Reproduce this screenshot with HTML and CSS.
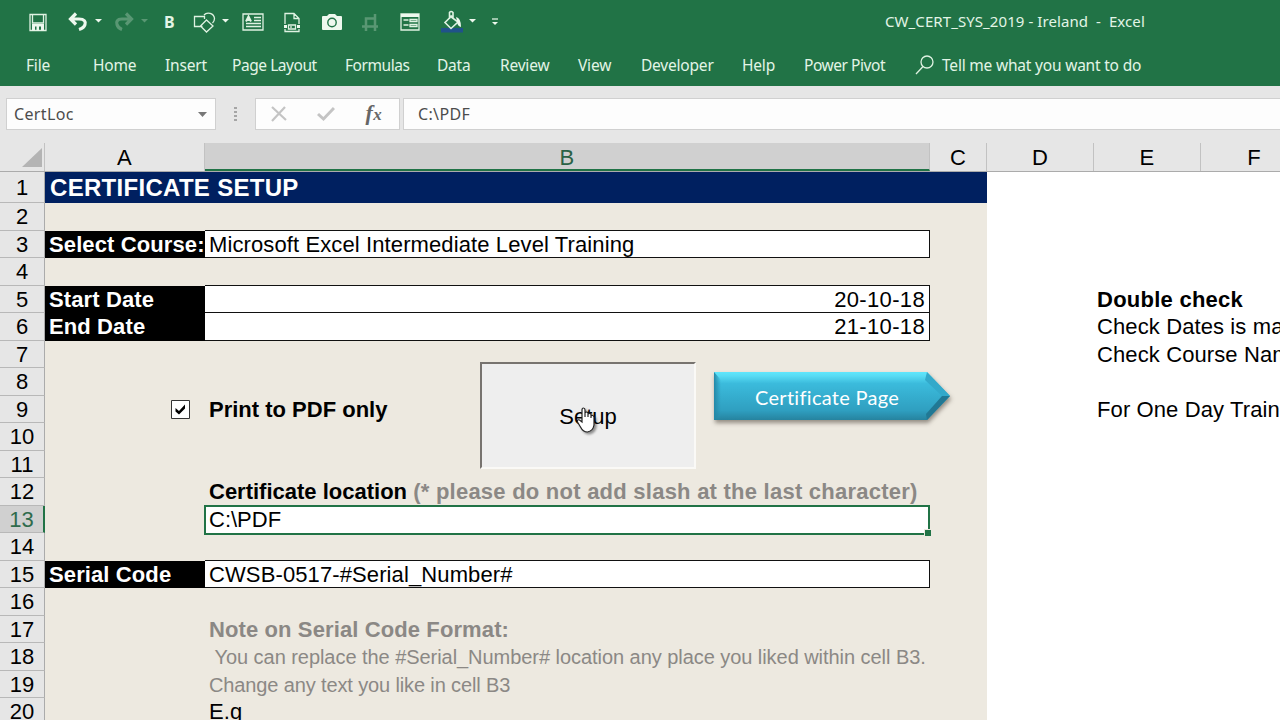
FILE: index.html
```html
<!DOCTYPE html>
<html lang="en">
<head>
    <meta charset="UTF-8">
    <meta name="viewport" content="width=device-width, initial-scale=1.0">
    <title>CW_CERT_SYS_2019 - Ireland - Excel</title>
    <link rel="stylesheet" href="styles.css">
</head>
<body>

<div class="app">
    <!-- Title bar and ribbon tabs -->
    <header class="ribbon">
        <div class="title-bar">
            <div class="quick-access">
                <svg width="20" height="22" viewBox="0 0 20 22" class="line"><path d="M2 3.500H18V19.500H2ZM4.500 4V12H15.500V4"/><path class="solid" d="M4 13H16V19.500H13V15.500H11V19.500H8.500V15.500H7V19.500H4Z"/></svg>
                <svg width="36" height="22" viewBox="0 0 36 22"><path class="thick" d="M3 8H12C17.500 8 19 11 18 13.500Q17 17 12 18.500M9 2.500L3.500 8L9 13.500"/><path class="solid" d="M28 8H35L31.500 11.500Z"/></svg>
                <svg width="36" height="22" viewBox="0 0 36 22" class="off"><path class="thick" d="M18 8H9C4 8 3 11 4 13.500Q5 17 9 18.500M13 2.500L18.500 8L13 13.500"/><path class="solid" d="M28 8H35L31.500 11.500Z"/></svg>
                <span class="bold-button">B</span>
                <svg width="36" height="22" viewBox="0 0 36 22" class="line"><path d="M9.500 15.500H1.500V5.500H11.500V8M11 4C14 .5 21 2 21.500 7.500Q21.500 10 19.500 12M13.500 9L20 15L13.500 21L7.500 15Z"/><path class="solid" d="M29 8H36L32.500 11.500Z"/></svg>
                <svg width="22" height="22" viewBox="0 0 22 22" class="line"><path d="M1 3H21V19H1ZM12 6.500H19M12 9.500H19M4 12.500H19M4 15.500H19"/><path class="mark" d="M4 10.500L6.500 5.500L9 10.500M5 9H8"/></svg>
                <svg width="18" height="22" viewBox="0 0 18 22" class="line"><path d="M2 13V2.500H11L16 7.500V13M11 3V7.500H16M2 18V20.500H16V18M5.500 14H12.500V18H5.500ZM8 15V17"/><path class="solid" d="M1 14H4V17H1ZM14 14H17V17H14Z"/></svg>
                <svg width="20" height="22" viewBox="0 0 20 22"><path class="solid" d="M1 5H5L7 3H13L15 5H19Q20 5 20 6V18Q20 19 19 19H1Q0 19 0 18V6Q0 5 1 5Z"/><circle class="lens" cx="10" cy="11.500" r="4.200"/></svg>
                <svg width="18" height="22" viewBox="0 0 18 22" class="off"><path class="crop-mark" d="M5 11V7.500H14V20M1 15.500H5.500M5 11V15.500H10M10 15.500H17M14 7.500V3M5 15.500V20"/></svg>
                <svg width="20" height="22" viewBox="0 0 20 22" class="line"><path d="M1 3H19V19H1ZM3.500 9H8.500M3.500 14H8.500M10 8.500H17V10.500H10ZM10 13.500H17V15.500H10Z"/><path class="solid" d="M1 3H19V6H1Z"/></svg>
                <svg width="36" height="24" viewBox="0 0 36 24" class="line"><path class="fill-color" d="M0 18H22V22.500H0Z"/><path class="bucket" d="M9 6L17 12L10 18.500L4 12.500L11 5.500M8.500 9V2.500Q10 .5 12 2.500V9"/><path class="solid" d="M15 7Q20 8 20 17Q16 16 16 11Z"/><path class="solid" d="M28 9H35L31.500 12.500Z"/></svg>
                <svg width="8" height="22" viewBox="0 0 8 22" class="line"><path d="M1 8H7"/><path class="solid" d="M1 11H7L4 14Z"/></svg>
            </div>
            <div class="window-title">CW_CERT_SYS_2019 - Ireland&nbsp; -&nbsp; Excel</div>
        </div>
        <nav class="tabs">
            <span>File</span>
            <span>Home</span>
            <span>Insert</span>
            <span class="tight">Page Layout</span>
            <span class="tight">Formulas</span>
            <span>Data</span>
            <span>Review</span>
            <span>View</span>
            <span>Developer</span>
            <span>Help</span>
            <span class="tight">Power Pivot</span>
            <svg width="20" height="22" viewBox="0 0 20 22" class="line"><circle cx="12" cy="8" r="6"/><path d="M8 12.500L1 20"/></svg>
            <span>Tell me what you want to do</span>
        </nav>
    </header>

    <!-- Name box and formula bar -->
    <div class="formula-row">
        <div class="name-box">CertLoc <svg width="9" height="5" viewBox="0 0 9 5"><path d="M0 0H9L4.500 5Z"/></svg></div>
        <div class="grip"><i></i><i></i><i></i><i></i></div>
        <div class="formula-buttons">
            <svg width="16" height="16" viewBox="0 0 16 16"><path d="M1 1L15 14M14 1L1 15"/></svg>
            <svg width="18" height="16" viewBox="0 0 18 16"><path class="tick" d="M1 8L6.500 13L17 2"/></svg>
            <span class="fx">f<small>x</small></span>
        </div>
        <div class="formula-input">C:\PDF</div>
    </div>

    <main class="sheet">
        <div class="col-heads">
            <div class="corner"><svg width="20" height="19" viewBox="0 0 20 19"><path d="M20 0V19H0Z"/></svg></div>
            <div>A</div>
            <div class="active">B</div>
            <div>C</div>
            <div>D</div>
            <div>E</div>
            <div>F</div>
        </div>

        <div class="row first"><b class="num">1</b><div class="title">CERTIFICATE SETUP</div></div>
        <div class="row"><b class="num">2</b></div>
        <div class="row"><b class="num">3</b><div class="label">Select Course:</div><div class="field">Microsoft Excel Intermediate Level Training</div></div>
        <div class="row"><b class="num">4</b></div>
        <div class="row"><b class="num">5</b><div class="label">Start Date</div><div class="field date">20-10-18</div><div class="note strong">Double check</div></div>
        <div class="row"><b class="num">6</b><div class="label">End Date</div><div class="field date">21-10-18</div><div class="note">Check Dates is ma</div></div>
        <div class="row"><b class="num">7</b><div class="note">Check Course Nam</div></div>
        <div class="row"><b class="num">8</b></div>
        <div class="row"><b class="num">9</b><div class="check-cell"><svg class="checkbox" width="19" height="19" viewBox="0 0 19 19"><path class="box" d="M.5 .5H18.500V18.500H.5Z"/><path d="M4.500 8L8 11L14 4.500V8.500L8 14.500L4.500 11.500Z"/></svg></div><div class="text strong print">Print to PDF only</div><div class="note">For One Day Train</div></div>
        <div class="row"><b class="num">10</b></div>
        <div class="row"><b class="num">11</b></div>
        <div class="row"><b class="num">12</b><div class="text strong location">Certificate location <span>(* please do not add slash at the last character)</span></div></div>
        <div class="row"><b class="num active">13</b><div class="field selected">C:\PDF</div></div>
        <div class="row"><b class="num">14</b></div>
        <div class="row"><b class="num">15</b><div class="label">Serial Code</div><div class="field">CWSB-0517-#Serial_Number#</div></div>
        <div class="row"><b class="num">16</b></div>
        <div class="row"><b class="num">17</b><div class="text strong grey">Note on Serial Code Format:</div></div>
        <div class="row"><b class="num">18</b><div class="text hint">&nbsp;You can replace the #Serial_Number# location any place you liked within cell B3.</div></div>
        <div class="row"><b class="num">19</b><div class="text hint short">Change any text you like in cell B3</div></div>
        <div class="row"><b class="num">20</b><div class="text">E.g</div></div>

        <!-- Objects floating over the cells -->
        <button class="setup-button">Setup</button>
        <a class="page-link">
            <svg width="250" height="64" viewBox="0 0 250 64">
                <defs>
                    <linearGradient id="face" x1="0" y1="0" x2="0" y2="1">
                        <stop offset="0" stop-color="#5fe6fc"/>
                        <stop offset="0.08" stop-color="#58dcf4"/>
                        <stop offset="0.24" stop-color="#3bbbdc"/>
                        <stop offset="0.8" stop-color="#2f9fc0"/>
                        <stop offset="1" stop-color="#26839f"/>
                    </linearGradient>
                    <linearGradient id="edge" x1="0" y1="0" x2="1" y2="0">
                        <stop offset="0" stop-color="#2388a8"/>
                        <stop offset="1" stop-color="#2388a8" stop-opacity="0"/>
                    </linearGradient>
                </defs>
                <path fill="url(#face)" d="M4 3H217L240 27L217 51H4Z"/>
                <path fill="url(#edge)" d="M4 3L11 11V44L4 51Z"/>
                <path fill="#33a9ca" d="M217 3L240 27H232L215 11Z"/>
                <path fill="#217894" d="M240 27L217 51L216 45L232 27Z"/>
            </svg>
            <span>Certificate Page</span>
        </a>
        <svg class="cursor" width="26" height="32" viewBox="0 0 26 32"><path d="M7 17V5Q7 3 8.500 3T10 5V12V8Q11.500 6 13 8V12V9Q14.500 7.500 16 9V13V11Q18 9.500 19 12V20Q18 26 12.500 27Q8 27 5.500 22L2.500 17Q2 14 4.500 15Z"/></svg>
    </main>
</div>

</body>
</html>
```
FILE: styles.css
```css
* {
    box-sizing: border-box;
}
body {
    margin: 0;
    overflow: hidden;
    background: #fff;
}
.app {
    width: 1280px;
    height: 720px;
    overflow: hidden;
    font-family: "Liberation Sans", Arial, sans-serif;
}
svg {
    display: block;
    flex: none;
}

/* Ribbon */
.ribbon {
    height: 86px;
    background: #217346;
    color: #e3f5e6;
    font-family: "Noto Sans", sans-serif;
    font-size: 15.5px;
}
.title-bar {
    display: flex;
    height: 44px;
}
.quick-access {
    display: grid;
    grid-template-columns: 39px 46px 51px 29px 49px 41px 39px 39px 39px 41px 50px 8px;
    align-items: center;
    width: 885px;
    padding-left: 28px;
}
.quick-access svg {
    fill: none;
    stroke: none;
}
.quick-access .line,
.tabs .line {
    fill: none;
    stroke: #dff2e2;
    stroke-width: 1.3;
}
.quick-access .solid {
    fill: #eef8ee;
    stroke: none;
}
.quick-access .thick {
    stroke: #eef8ee;
    stroke-width: 3.2;
}
.quick-access .off {
    opacity: 0.27;
}
.crop-mark {
    stroke: #eef8ee;
    stroke-width: 2.5;
}
.mark {
    stroke-width: 2;
}
.lens {
    stroke: #217346;
    stroke-width: 1.4;
}
.fill-color {
    fill: #20528a;
    stroke: none;
}
.bucket {
    stroke-width: 1.6;
}
.bold-button {
    font-weight: bold;
    font-size: 16px;
}
.window-title {
    padding-top: 10px;
    font-size: 15px;
    line-height: 22px;
    white-space: nowrap;
    letter-spacing: 0.08px;
}
.tabs {
    display: grid;
    grid-template-columns: 67px 72px 67px 113px 92px 63px 78px 63px 101px 62px 111px 27px 220px;
    align-items: center;
    padding-left: 26px;
    line-height: 42px;
    white-space: nowrap;
    letter-spacing: -0.2px;
}
.tabs .tight {
    letter-spacing: -0.45px;
}

/* Formula bar */
.formula-row {
    display: flex;
    height: 57px;
    padding: 12px 0 13px 6px;
    background: #e6e6e6;
    font-family: "Noto Sans", sans-serif;
    font-size: 16px;
    letter-spacing: 0.35px;
    color: #4c4c4c;
}
.name-box,
.formula-buttons,
.formula-input {
    display: flex;
    align-items: center;
    background: #fdfdfd;
    border: 1px solid #d0d0d0;
}
.name-box {
    justify-content: space-between;
    width: 210px;
    padding: 0 8px 0 7px;
}
.name-box svg {
    fill: #777;
}
.grip {
    display: flex;
    flex-direction: column;
    justify-content: center;
    align-items: center;
    gap: 2px;
    width: 39px;
}
.grip i {
    width: 3px;
    height: 2px;
    background: #a5a5a5;
}
.formula-buttons {
    justify-content: space-between;
    width: 145px;
    padding: 0 17px 0 15px;
}
.formula-buttons svg {
    fill: none;
    stroke: #c4c4c4;
    stroke-width: 2.2;
}
.formula-buttons .tick {
    stroke-width: 3;
}
.fx {
    font: italic bold 22px/26px "Liberation Serif", serif;
    color: #666;
}
.fx small {
    font-size: 17px;
}
.formula-input {
    flex: 1;
    margin-left: 3px;
    padding-left: 14px;
    border-right: 0;
}

/* Sheet */
.sheet {
    position: relative;
    height: 577px;
    font-size: 22px;
    letter-spacing: 0.11px;
    background: linear-gradient(to right, #ede9e0 987px, #fff 987px);
}
.col-heads,
.row {
    display: grid;
    grid-template-columns: 45px 160px 725px 57px 107px 107px 107px;
}
.col-heads {
    height: 29px;
    background: #e6e6e6;
    border-bottom: 1px solid #ababab;
    line-height: 29px;
    text-align: center;
    overflow: hidden;
}
.col-heads div {
    border-right: 1px solid #c2c2c2;
}
.col-heads .active {
    height: 28px;
    background: #d0d0d0;
    border-bottom: 2px solid #217346;
    color: #2a6246;
}
.corner {
    padding: 5px 0 0 22px;
}
.corner svg {
    fill: #b4b4b4;
}
.row {
    grid-template-rows: 100%;
    height: 27.5px;
    line-height: 28px;
    white-space: nowrap;
}
.row.first {
    height: 31px;
    line-height: 31px;
}
.num {
    grid-column: 1;
    background: #e6e6e6;
    border-right: 1px solid #ababab;
    border-bottom: 1px solid #b8b8b8;
    font-weight: normal;
    letter-spacing: 0;
    text-align: center;
}
.num.active {
    background: #d0d0d0;
    border-right: 2px solid #217346;
    color: #2f6b4c;
}
.title {
    grid-column: 2 / 5;
    padding-left: 5px;
    background: #002060;
    color: #fff;
    font-weight: bold;
    font-size: 24px;
    letter-spacing: 0.3px;
}
.label {
    grid-column: 2;
    padding-left: 4px;
    background: #000;
    color: #fff;
    font-weight: bold;
}
.field {
    grid-column: 3;
    height: 28.5px;
    margin-top: -1px;
    padding: 0 4px 0 4px;
    background: #fff;
    border: 1px solid #111;
    border-left: 0;
}
.date {
    text-align: right;
    letter-spacing: 0.35px;
}
.text {
    grid-column: 3;
    padding-left: 4px;
}
.strong {
    font-weight: bold;
}
.note.strong {
    letter-spacing: 0.25px;
}
.print,
.location {
    letter-spacing: 0;
}
.grey,
.location span {
    color: #8b8885;
}
.location span {
    letter-spacing: 0.24px;
}
.hint {
    color: #8b8885;
    font-size: 20px;
    letter-spacing: -0.05px;
}
.short {
    letter-spacing: -0.13px;
}
.note {
    grid-column: 6;
    padding-left: 3px;
}
.check-cell {
    grid-column: 2;
    padding: 4px 0 0 126px;
}
.checkbox .box {
    fill: #fff;
    stroke: #333;
}
.selected {
    position: relative;
    height: 30px;
    margin: -1px 0 0 -1px;
    border: 2px solid #217346;
    padding-left: 3px;
    line-height: 26px;
    letter-spacing: 0;
}
.selected::after {
    content: "";
    position: absolute;
    right: -3px;
    bottom: -3px;
    width: 6px;
    height: 6px;
    background: #217346;
    border: solid #ede9e0;
    border-width: 1px 0 0 1px;
}

/* Floating controls */
.setup-button {
    position: absolute;
    left: 480px;
    top: 219px;
    width: 216px;
    height: 107px;
    padding: 3px 0 0;
    background: #eee;
    border: 2px solid;
    border-color: #77736f #faf9f6 #faf9f6 #77736f;
    font: 22px "Liberation Sans", Arial, sans-serif;
    color: #000;
}
.page-link {
    position: absolute;
    left: 710px;
    top: 226px;
    width: 250px;
    color: #fff;
    font-family: Lato, sans-serif;
    font-size: 20px;
}
.page-link svg {
    filter: drop-shadow(1px 3px 2px rgba(60, 50, 40, 0.5));
}
.page-link span {
    position: absolute;
    left: 45px;
    top: 16px;
    line-height: 24px;
    white-space: nowrap;
    letter-spacing: 0.3px;
}
.cursor {
    position: absolute;
    left: 575px;
    top: 262px;
    fill: #fff;
    stroke: #222;
    stroke-width: 1.2;
    filter: drop-shadow(2px 2px 1px rgba(0, 0, 0, 0.4));
}
```
